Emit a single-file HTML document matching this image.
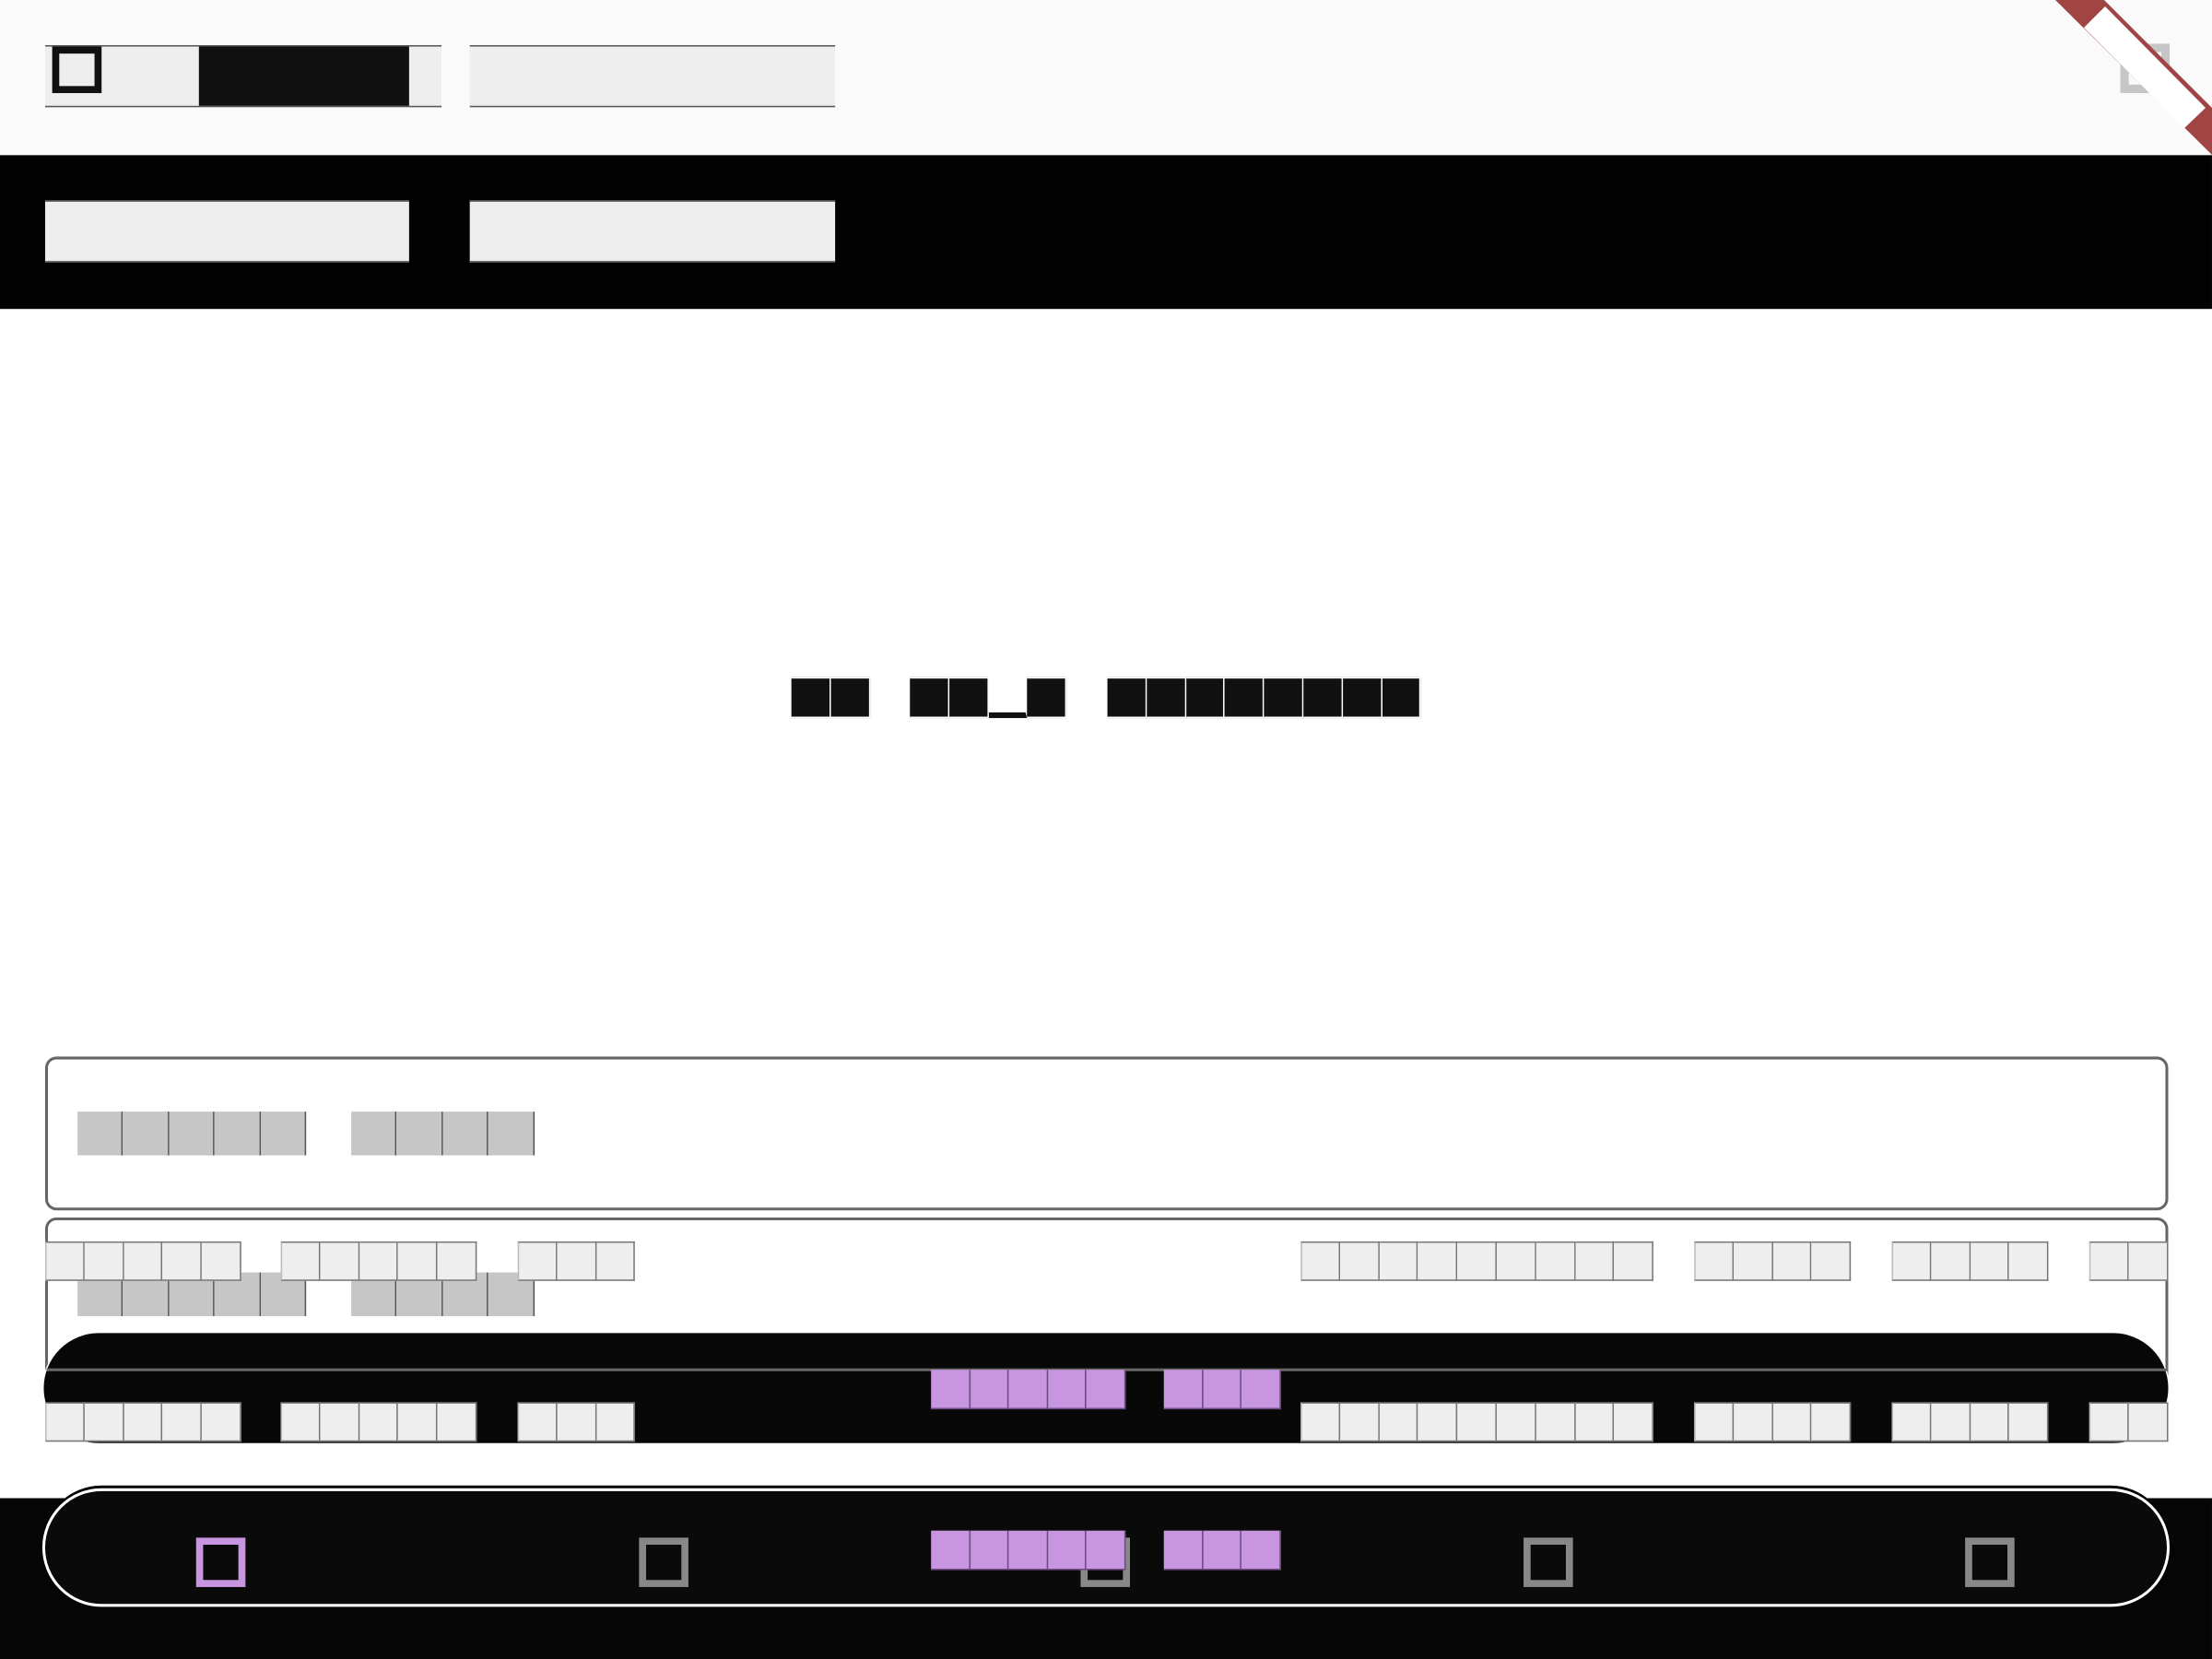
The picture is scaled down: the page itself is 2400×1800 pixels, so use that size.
<!DOCTYPE html>
<html><head><meta charset="utf-8">
<style>
html,body{margin:0;padding:0;width:2400px;height:1800px;overflow:hidden;background:#fff;font-family:"Liberation Sans",sans-serif}
#w{position:absolute;left:0;top:0;width:1568px;height:1176px;transform:scale(1.5306);transform-origin:0 0;background:#fff;overflow:hidden}
.a{position:absolute;box-sizing:border-box}
.row{position:absolute;display:flex}
.row i{display:block;box-sizing:border-box;flex:none}
.lt i{background:#eee;border:1px solid #777;border-left:none;height:28px;width:27.8px}
.lt i:first-child{border-left:1px solid #bbb}
.gr i{background:#c6c6c6;border-right:1px solid #555;height:31px;width:32.4px}
.pu i{background:#c896e0;border-right:1px solid #6a4a80;border-bottom:1px solid #6a4a80;height:28px;width:27.5px}
.bk i{background:#111;border:1px solid #fff;border-left:none;height:29px;width:27.8px}
.sq{position:absolute;width:35px;height:35px;box-sizing:border-box;border:5px solid #888}
</style></head><body><div id="w">
<div class="a" style="left:0;top:0;width:1568px;height:110px;background:#fafafa"></div>
<div class="a" style="left:32px;top:32px;width:281px;height:44px;background:#eee;border-top:1px solid #555;border-bottom:1px solid #555"></div>
<div class="a" style="left:141px;top:33px;width:149px;height:42px;background:#111"></div>
<div class="a" style="left:37px;top:33px;width:35px;height:33px;border:5px solid #111"></div>
<div class="a" style="left:333px;top:32px;width:259px;height:44px;background:#eee;border-top:1px solid #555;border-bottom:1px solid #555"></div>
<div class="a" style="left:1503px;top:31px;width:35px;height:35px;border:6px solid #c6c6c6"></div>
<div class="a" style="left:0;top:110px;width:1568px;height:109px;background:#020202"></div>
<div class="a" style="left:32px;top:142px;width:258px;height:44px;background:#eee;border-top:1px solid #555;border-bottom:1px solid #555"></div>
<div class="a" style="left:333px;top:142px;width:259px;height:44px;background:#eee;border-top:1px solid #555;border-bottom:1px solid #555"></div>

<div class="row bk" style="left:561px;top:480px"><i></i><i></i></div>
<div class="row bk" style="left:645px;top:480px"><i></i><i></i><i style="background:#fff;border-bottom:4px solid #111"></i><i></i></div>
<div class="row bk" style="left:785px;top:480px"><i></i><i></i><i></i><i></i><i></i><i></i><i></i><i></i></div>

<div class="a" style="left:32px;top:749px;width:1505px;height:109px;border:2px solid #666;border-radius:8px"></div>
<div class="row gr" style="left:55px;top:788px"><i></i><i></i><i></i><i></i><i></i></div>
<div class="row gr" style="left:249px;top:788px"><i></i><i></i><i></i><i></i></div>

<div class="a" style="left:32px;top:863px;width:1505px;height:130px;border:2px solid #666;border-bottom:none;border-radius:8px 8px 0 0"></div>
<div class="row gr" style="left:55px;top:902px"><i></i><i></i><i></i><i></i><i></i></div>
<div class="row gr" style="left:249px;top:902px"><i></i><i></i><i></i><i></i></div>
<div class="row lt" style="left:32px;top:880px"><i></i><i></i><i></i><i></i><i></i></div>
<div class="row lt" style="left:199px;top:880px"><i></i><i></i><i></i><i></i><i></i></div>
<div class="row lt" style="left:367px;top:880px"><i></i><i></i><i></i></div>
<div class="row lt" style="left:922px;top:880px"><i></i><i></i><i></i><i></i><i></i><i></i><i></i><i></i><i></i></div>
<div class="row lt" style="left:1201px;top:880px"><i></i><i></i><i></i><i></i></div>
<div class="row lt" style="left:1341px;top:880px"><i></i><i></i><i></i><i></i></div>
<div class="row lt" style="left:1481px;top:880px"><i></i><i></i></div>

<div class="a" style="left:30px;top:944px;width:1508px;height:80px;background:#080808;border:1px solid #fff;border-radius:40px/40px"></div>
<div class="a" style="left:33px;top:970px;width:1503px;height:2px;background:#666"></div>
<div class="row pu" style="left:660px;top:971px"><i></i><i></i><i></i><i></i><i></i></div>
<div class="row pu" style="left:825px;top:971px"><i></i><i></i><i></i></div>
<div class="row lt" style="left:32px;top:994px"><i></i><i></i><i></i><i></i><i></i></div>
<div class="row lt" style="left:199px;top:994px"><i></i><i></i><i></i><i></i><i></i></div>
<div class="row lt" style="left:367px;top:994px"><i></i><i></i><i></i></div>
<div class="row lt" style="left:922px;top:994px"><i></i><i></i><i></i><i></i><i></i><i></i><i></i><i></i><i></i></div>
<div class="row lt" style="left:1201px;top:994px"><i></i><i></i><i></i><i></i></div>
<div class="row lt" style="left:1341px;top:994px"><i></i><i></i><i></i><i></i></div>
<div class="row lt" style="left:1481px;top:994px"><i></i><i></i></div>

<div class="a" style="left:0;top:1062px;width:1568px;height:114px;background:#050505"></div>
<div class="a" style="left:30px;top:1055px;width:1508px;height:84px;background:#0a0a0a;border:2px solid #fff;border-radius:42px;box-shadow:0 -2px 0 #000"></div>
<div class="sq" style="left:139px;top:1090px;border-color:#c896e0"></div>
<div class="sq" style="left:453px;top:1090px"></div>
<div class="sq" style="left:766px;top:1090px"></div>
<div class="sq" style="left:1080px;top:1090px"></div>
<div class="sq" style="left:1393px;top:1090px"></div>
<div class="row pu" style="left:660px;top:1085px"><i></i><i></i><i></i><i></i><i></i></div>
<div class="row pu" style="left:825px;top:1085px"><i></i><i></i><i></i></div>
</div>
<svg style="position:absolute;left:0;top:0" width="2400" height="200"><polygon points="2230,0 2283,0 2400,117 2400,168" fill="#a04444"/><polygon points="2261,30 2284,7 2393,117 2370,139" fill="#fff"/></svg>
</body></html>
